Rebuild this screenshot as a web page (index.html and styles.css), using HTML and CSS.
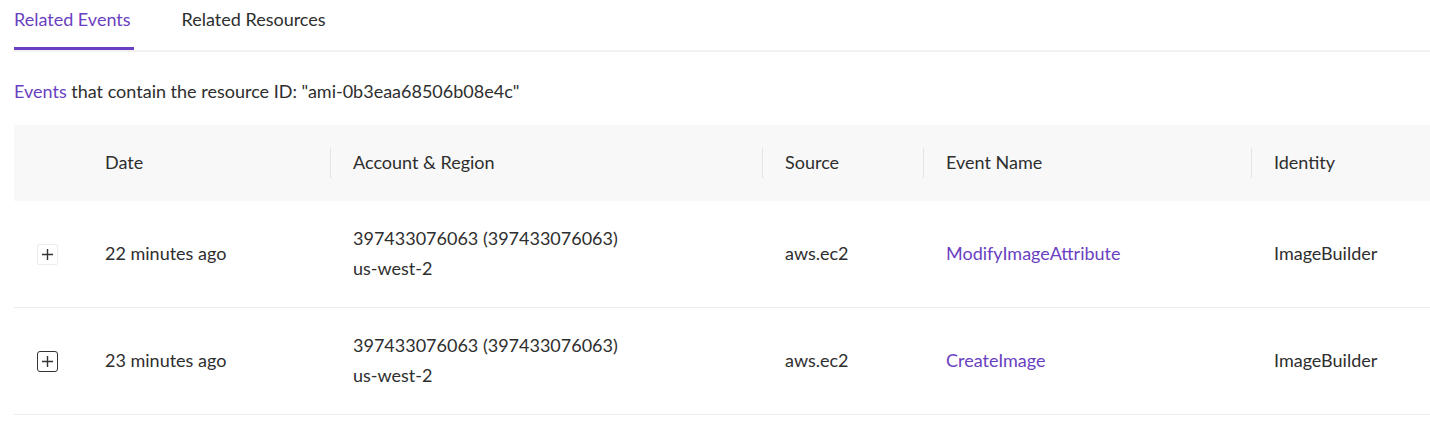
FILE: index.html
```html
<!DOCTYPE html>
<html>
  <head>
    <meta name="viewport" content="width=device-width, initial-scale=1.0" />
    <link rel="stylesheet" href="styles.css">
  </head>
  <body>
    <main>
      <nav class="tabs">
        <a class="tab active" href="#">Related Events</a>
        <a class="tab" href="#">Related Resources</a>
      </nav>
      <p class="summary"><a href="#">Events</a> that contain the resource ID: "ami-0b3eaa68506b08e4c"</p>
      <table class="events">
        <thead>
          <tr>
            <th class="col-toggle"></th>
            <th class="col-date">Date</th>
            <th class="col-account"><span class="sep"></span>Account &amp; Region</th>
            <th class="col-source"><span class="sep"></span>Source</th>
            <th class="col-name"><span class="sep"></span>Event Name</th>
            <th class="col-identity"><span class="sep"></span>Identity</th>
          </tr>
        </thead>
        <tbody>
          <tr>
            <td class="col-toggle">
              <button class="expand"><svg width="11" height="11" viewBox="0 0 11 11"><path d="M5.5 0v11M0 5.5h11" stroke="#333" stroke-width="1.4"/></svg></button>
            </td>
            <td>22 minutes ago</td>
            <td>397433076063 (397433076063)<br>us-west-2</td>
            <td>aws.ec2</td>
            <td><a href="#">ModifyImageAttribute</a></td>
            <td>ImageBuilder</td>
          </tr>
          <tr>
            <td class="col-toggle">
              <button class="expand focused"><svg width="11" height="11" viewBox="0 0 11 11"><path d="M5.5 0v11M0 5.5h11" stroke="#333" stroke-width="1.4"/></svg></button>
            </td>
            <td>23 minutes ago</td>
            <td>397433076063 (397433076063)<br>us-west-2</td>
            <td>aws.ec2</td>
            <td><a href="#">CreateImage</a></td>
            <td>ImageBuilder</td>
          </tr>
        </tbody>
      </table>
    </main>
  </body>
</html>
```

FILE: styles.css
```css
html {
  padding: 0;
  margin: 0;
}
body {
  margin: 0;
  padding: 0;
  font-size: 18px;
  font-family: Lato, "Noto Sans", sans-serif;
  background-color: white;
  color: #2e2e2e;
}
main {
  padding: 0 0 0 14px;
}
a {
  color: #6a3fc1;
  text-decoration: none;
}

.tabs {
  display: flex;
  gap: 48px;
  border-bottom: 2px solid #f1f1f1;
  height: 50px;
}
.tab {
  color: #2e2e2e;
  padding-top: 8px;
  height: 42px;
  box-sizing: content-box;
}
.tab.active {
  color: #6a3fc1;
  border-bottom: 3px solid #6a3fc1;
  height: 39px;
  padding-right: 3px;
}

.summary {
  margin: 27px 0 0;
  line-height: 24px;
}

.events {
  margin-top: 22px;
  width: 100%;
  border-collapse: collapse;
}
.events th {
  background: #f8f8f8;
  height: 74px;
  font-weight: normal;
  text-align: left;
  position: relative;
  padding: 0 0 2px 23px;
}
.events th.col-date {
  padding-left: 0;
}
.sep {
  position: absolute;
  left: 0;
  top: 23px;
  bottom: 23px;
  border-left: 1px solid #e4e4e4;
}
.events td {
  height: 104px;
  padding: 0 0 2px 23px;
  border-bottom: 1px solid #ececec;
  line-height: 30px;
}
.events td:nth-child(2) {
  padding-left: 0;
}
.events .col-toggle {
  width: 91px;
  padding: 0;
}
.col-date { width: 225px; }
.col-account { width: 409px; }
.col-source { width: 138px; }
.col-name { width: 305px; }

.expand {
  display: flex;
  align-items: center;
  justify-content: center;
  margin-left: 23px;
  width: 21px;
  height: 21px;
  padding: 0;
  border: 1px solid #ececec;
  border-radius: 2px;
  background: white;
}
.expand.focused {
  border-color: #333;
  border-radius: 3px;
}
```
